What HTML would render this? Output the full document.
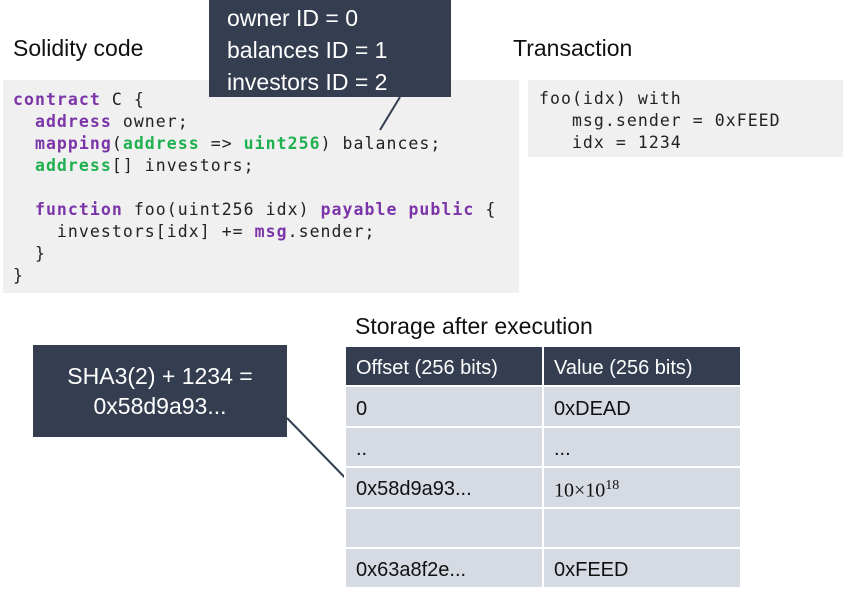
<!DOCTYPE html>
<html><head><meta charset="utf-8"><style>
body{margin:0;width:847px;height:594px;background:#fff;position:relative;overflow:hidden;font-family:"Liberation Sans","DejaVu Sans",sans-serif;color:#111}
.a{position:absolute}
.code{font-family:"DejaVu Sans Mono","Liberation Mono",monospace;font-size:16.5px;letter-spacing:1.05px;line-height:22px;white-space:pre;color:#222}
.p{color:#7b35a8;font-weight:bold}.g{color:#1fb04f;font-weight:bold}
.dark{background:#343e50;color:#fff}
.h{font-size:23px}
td{padding:5px 0 0 10px;font-size:20px;height:33.4px;border:2px solid #fff;box-sizing:content-box}
</style></head><body>
<div class="a h" style="left:13px;top:35px">Solidity code</div>
<div class="a h" style="left:513px;top:35px">Transaction</div>
<div class="a" style="left:3px;top:80px;width:516px;height:213px;background:#f0f0f0"></div>
<div class="a code" style="left:13px;top:89px"><span class="p">contract</span> C {
  <span class="p">address</span> owner;
  <span class="p">mapping</span>(<span class="g">address</span> => <span class="g">uint256</span>) balances;
  <span class="g">address</span>[] investors;

  <span class="p">function</span> foo(uint256 idx) <span class="p">payable</span> <span class="p">public</span> {
    investors[idx] += <span class="p">msg</span>.sender;
  }
}</div>
<div class="a" style="left:528px;top:80px;width:315px;height:77px;background:#f0f0f0"></div>
<div class="a code" style="left:539px;top:88px">foo(idx) with
   msg.sender = 0xFEED
   idx = 1234</div>
<div class="a dark" style="left:209px;top:0;width:242px;height:97px"></div>
<div class="a" style="left:227px;top:2px;color:#fff;font-size:23px;line-height:32px">owner ID = 0<br>balances ID = 1<br>investors ID = 2</div>
<svg class="a" style="left:0;top:0" width="847" height="594"><line x1="400" y1="97" x2="380" y2="130" stroke="#343e50" stroke-width="2"/><line x1="287" y1="418" x2="356" y2="489" stroke="#343e50" stroke-width="2"/></svg>
<div class="a h" style="left:355px;top:313px">Storage after execution</div>
<div class="a dark" style="left:33px;top:345px;width:254px;height:92px;text-align:center;font-size:23px;line-height:30px;padding-top:16px;box-sizing:border-box">SHA3(2) + 1234 =<br>0x58d9a93...</div>
<table class="a" style="left:344px;top:345px;border-collapse:collapse;width:398px">
<tr style="background:#343e50;color:#fff"><td style="width:186px">Offset (256 bits)</td><td>Value (256 bits)</td></tr>
<tr style="background:#d5dae3"><td>0</td><td>0xDEAD</td></tr>
<tr style="background:#d5dae3"><td>..</td><td>...</td></tr>
<tr style="background:#d5dae3"><td>0x58d9a93...</td><td style="font-family:'Liberation Serif',serif">10×10<sup style="font-size:14px">18</sup></td></tr>
<tr style="background:#d5dae3"><td></td><td></td></tr>
<tr style="background:#d5dae3"><td>0x63a8f2e...</td><td>0xFEED</td></tr>
</table>
</body></html>
